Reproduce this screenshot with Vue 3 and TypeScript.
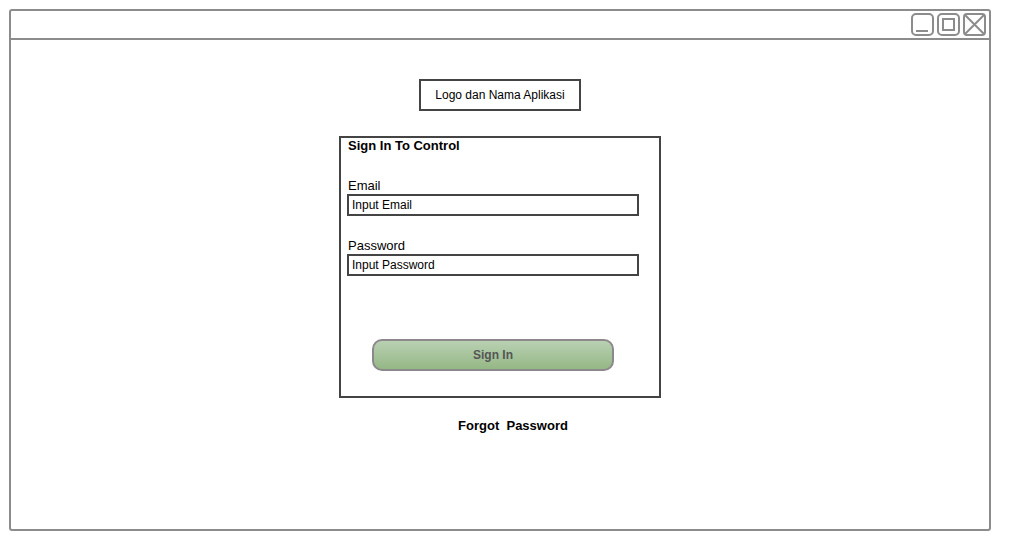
<script setup lang="ts">
import { ref } from 'vue'

const email = ref('')
const password = ref('')
</script>

<template>
  <div class="window">
    <header class="titlebar">
      <button type="button" class="control" aria-label="Minimize">
        <svg viewBox="0 0 23 23" fill="none" stroke="#8c8c8c" stroke-width="2">
          <rect x="1" y="1" width="21" height="21" rx="4" />
          <path d="M5 18H17" />
        </svg>
      </button>
      <button type="button" class="control" aria-label="Maximize">
        <svg viewBox="0 0 23 23" fill="none" stroke="#8c8c8c" stroke-width="2">
          <rect x="1" y="1" width="21" height="21" rx="4" />
          <rect x="6" y="6" width="11" height="11" />
        </svg>
      </button>
      <button type="button" class="control" aria-label="Close">
        <svg viewBox="0 0 23 23" fill="none" stroke="#8c8c8c" stroke-width="2">
          <rect x="1" y="1" width="21" height="21" rx="3" />
          <path d="M2 2L21 21M21 2L2 21" />
        </svg>
      </button>
    </header>

    <main class="content">
      <div class="brand">Logo dan Nama Aplikasi</div>

      <form class="card" @submit.prevent>
        <h1 class="title">Sign In To Control</h1>
        <div class="field">
          <label for="email">Email</label>
          <input id="email" v-model="email" type="email" placeholder="Input Email" />
        </div>
        <div class="field">
          <label for="password">Password</label>
          <input id="password" v-model="password" type="password" placeholder="Input Password" />
        </div>
        <button type="submit" class="submit">Sign In</button>
      </form>

      <a class="forgot" href="#">Forgot&nbsp; Password</a>
    </main>
  </div>
</template>

<style>
body {
  background: #fff;
}
</style>

<style scoped>
.window {
  box-sizing: border-box;
  display: flex;
  flex-direction: column;
  min-height: calc(100vh - 28px);
  margin: 9px 19px 19px 9px;
  border: 2px solid #8c8c8c;
  border-radius: 3px;
  font-family: "Liberation Sans", Arial, sans-serif;
  font-size: 13px;
  line-height: 15px;
  color: #000;
}

.titlebar {
  display: flex;
  justify-content: flex-end;
  gap: 3px;
  padding: 2px 3px;
  border-bottom: 2px solid #8c8c8c;
}

.control {
  width: 23px;
  height: 23px;
  padding: 0;
  border: 0;
  background: none;
}

.control svg {
  display: block;
  width: 100%;
  height: 100%;
}

.content {
  display: flex;
  flex-direction: column;
  align-items: center;
  padding: 39px 16px 16px;
}

.brand {
  box-sizing: border-box;
  min-width: 162px;
  padding: 7px 8px 6px;
  border: 2px solid #444;
  font-size: 12px;
  text-align: center;
}

.card {
  box-sizing: border-box;
  display: flex;
  flex-direction: column;
  width: 100%;
  max-width: 322px;
  margin-top: 25px;
  padding: 0 20px 25px 6px;
  border: 2px solid #444;
}

.title {
  margin: 0 0 25px;
  padding-left: 1px;
  font-size: 13px;
  font-weight: bold;
}

.field {
  display: flex;
  flex-direction: column;
  gap: 1px;
}

.field + .field {
  margin-top: 22px;
}

.field label {
  padding-left: 1px;
}

.field input {
  box-sizing: border-box;
  width: 100%;
  height: 22px;
  padding: 0 3px;
  border: 2px solid #444;
  border-radius: 0;
  background: #fff;
  color: #000;
  font-family: inherit;
  font-size: 12px;
}

.field input::placeholder {
  color: #000;
  opacity: 1;
}

.submit {
  height: 32px;
  margin: 63px 25px 0;
  padding: 0;
  border: 2px solid #8c888c;
  border-radius: 10px;
  background: linear-gradient(#b9d1b3, #95b785);
  color: #555;
  font-family: inherit;
  font-size: 12px;
  font-weight: bold;
}

.forgot {
  margin: 20px 0 0 26px;
  color: #000;
  font-weight: bold;
  text-decoration: none;
}
</style>
